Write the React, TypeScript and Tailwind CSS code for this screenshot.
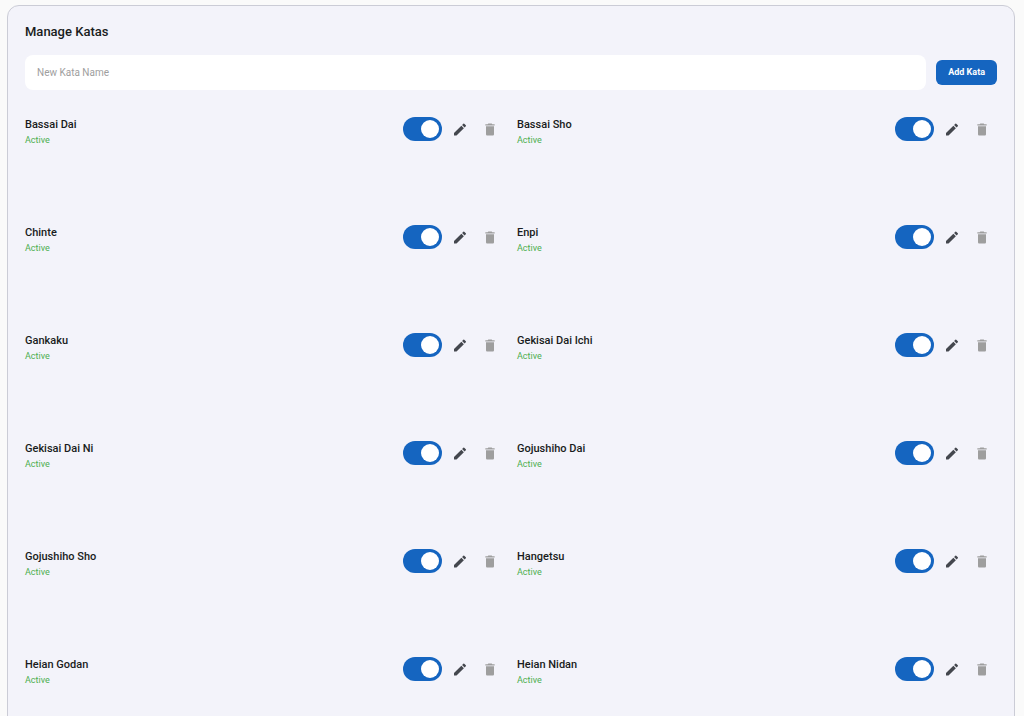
import { useState } from "react";
import { MdDelete, MdEdit } from "react-icons/md";

type Kata = { name: string; active: boolean };

const initialKatas: Kata[] = [
  "Bassai Dai",
  "Bassai Sho",
  "Chinte",
  "Enpi",
  "Gankaku",
  "Gekisai Dai Ichi",
  "Gekisai Dai Ni",
  "Gojushiho Dai",
  "Gojushiho Sho",
  "Hangetsu",
  "Heian Godan",
  "Heian Nidan",
].map((name) => ({ name, active: true }));

function KataItem({ kata, onToggle, onDelete }: { kata: Kata; onToggle: () => void; onDelete: () => void }) {
  return (
    <li className="flex items-start justify-between">
      <div className="pt-[3px]">
        <p className="text-[11px] leading-4 font-medium text-[#191c20]">{kata.name}</p>
        <p className={kata.active ? "text-[9px] leading-[14px] text-[#4caf50]" : "text-[9px] leading-[14px] text-[#9e9e9e]"}>
          {kata.active ? "Active" : "Inactive"}
        </p>
      </div>
      <div className="flex items-center">
        <input
          type="checkbox"
          role="switch"
          aria-label={`${kata.name} active`}
          checked={kata.active}
          onChange={onToggle}
          className="mr-[3px] flex h-6 w-[39px] cursor-pointer appearance-none items-center rounded-full bg-gray-300 px-[3px] before:block before:size-[18px] before:rounded-full before:bg-white checked:justify-end checked:bg-[#1565c0]"
        />
        <button type="button" aria-label={`Edit ${kata.name}`} className="grid size-[30px] place-items-center text-[#44474e]">
          <MdEdit viewBox="0 -0.75 24 24" className="size-4" />
        </button>
        <button
          type="button"
          aria-label={`Delete ${kata.name}`}
          onClick={onDelete}
          className="grid size-[30px] place-items-center text-[#9e9e9e]"
        >
          <MdDelete viewBox="0 -0.75 24 24" className="size-4" />
        </button>
      </div>
    </li>
  );
}

export default function App() {
  const [katas, setKatas] = useState(initialKatas);
  const [name, setName] = useState("");

  const addKata = () => {
    if (!name.trim()) return;
    setKatas([...katas, { name: name.trim(), active: true }]);
    setName("");
  };

  return (
    <div className="h-screen overflow-hidden bg-[#fafafa] pt-[5px] pr-[9px] pl-[7px] font-['Roboto',sans-serif]">
      <main className="rounded-xl border border-[#cbccd6] bg-[#f3f3fa] px-[17px] pt-4">
        <h1 className="text-[13px] leading-5 font-medium text-[#191c20]">Manage Katas</h1>

        <form
          className="mt-[13px] flex items-center gap-[10px]"
          onSubmit={(e) => {
            e.preventDefault();
            addKata();
          }}
        >
          <input
            type="text"
            aria-label="New Kata Name"
            placeholder="New Kata Name"
            value={name}
            onChange={(e) => setName(e.target.value)}
            className="h-[35px] min-w-0 flex-1 rounded-lg bg-white px-3 text-[10px] text-[#191c20] outline-none placeholder:text-[#9e9e9e]"
          />
          <button type="submit" className="h-[25px] rounded-md bg-[#1565c0] px-3 text-[9px] font-bold text-white">
            Add Kata
          </button>
        </form>

        <ul className="mt-6 grid auto-rows-[108px] grid-cols-2 gap-x-3">
          {katas.map((kata, i) => (
            <KataItem
              key={kata.name}
              kata={kata}
              onToggle={() => setKatas(katas.map((k, j) => (j === i ? { ...k, active: !k.active } : k)))}
              onDelete={() => setKatas(katas.filter((_, j) => j !== i))}
            />
          ))}
        </ul>
      </main>
    </div>
  );
}
